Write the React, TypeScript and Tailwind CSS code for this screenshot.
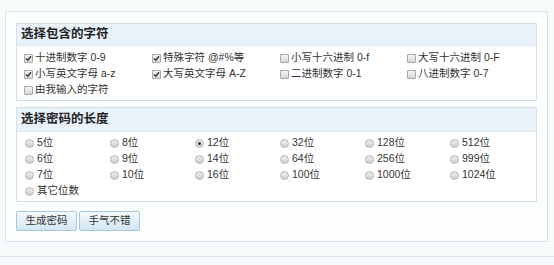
const charOptions = [
  { label: '十进制数字 0-9', checked: true },
  { label: '特殊字符 @#%等', checked: true },
  { label: '小写十六进制 0-f', checked: false },
  { label: '大写十六进制 0-F', checked: false },
  { label: '小写英文字母 a-z', checked: true },
  { label: '大写英文字母 A-Z', checked: true },
  { label: '二进制数字 0-1', checked: false },
  { label: '八进制数字 0-7', checked: false },
  { label: '由我输入的字符', checked: false },
];

const lengths = [
  '5位', '8位', '12位', '32位', '128位', '512位',
  '6位', '9位', '14位', '64位', '256位', '999位',
  '7位', '10位', '16位', '100位', '1000位', '1024位',
  '其它位数',
];

function CheckBox({ checked }: { checked: boolean }) {
  return (
    <span className="flex h-[9px] w-[9px] shrink-0 items-center justify-center rounded-[1px] border border-[#a8a8a8] bg-gradient-to-b from-[#f4f4f4] to-[#d8d8d8]">
      {checked && (
        <svg width="7" height="7" viewBox="0 0 7 7">
          <path d="M1 3.6 L2.8 5.3 L6 1.3" fill="none" stroke="#333" strokeWidth="1.4" />
        </svg>
      )}
    </span>
  );
}

function Radio({ checked }: { checked: boolean }) {
  return (
    <span className="flex h-[9px] w-[9px] shrink-0 items-center justify-center rounded-full border border-[#b4b4b4] bg-gradient-to-b from-[#eeeeee] to-[#d0d0d0]">
      {checked && <span className="h-[3px] w-[3px] rounded-full bg-[#333]" />}
    </span>
  );
}

function SectionHeader({ title, tall }: { title: string; tall?: boolean }) {
  return (
    <div
      className={`flex items-center border-b border-[#e3ebf2] bg-[#e9f1f9] pl-[4px] text-[12.5px] font-bold text-[#222] ${tall ? 'h-[24px]' : 'h-[22px]'}`}
    >
      {title}
    </div>
  );
}

export default function App() {
  return (
    <div
      className="h-[265px] w-[554px] bg-[#f7fbfc] pt-[11px] text-[10.5px] text-[#333]"
      style={{ fontFamily: '"Liberation Sans", "Noto Sans CJK SC", sans-serif' }}
    >
      <div className="ml-[5px] w-[543px] border border-[#d8e5ea] bg-[#fcfefe] px-[10px] pb-[10px] pt-[11px]">
        <div className="border border-[#d3dfe9] bg-white">
          <SectionHeader title="选择包含的字符" />
          <div className="grid grid-cols-[128px_128px_127px_127px] pb-[2px] pl-[7px] pt-[4px]">
            {charOptions.map((o) => (
              <div key={o.label} className="flex h-[16px] items-center gap-[2px] whitespace-nowrap">
                <CheckBox checked={o.checked} />
                <span>{o.label}</span>
              </div>
            ))}
          </div>
        </div>

        <div className="mt-[6px] border border-[#d3dfe9] bg-white">
          <SectionHeader title="选择密码的长度" tall />
          <div className="grid grid-cols-[85px_85px_85px_85px_85px_85px] pb-[2px] pl-[8px] pt-[3px]">
            {lengths.map((l) => (
              <div key={l} className="flex h-[16px] items-center gap-[3px] whitespace-nowrap">
                <Radio checked={l === '12位'} />
                <span>{l}</span>
              </div>
            ))}
          </div>
        </div>

        <div className="mt-[9px] flex gap-[2px]">
          <button className="h-[20px] w-[61px] rounded-[2px] border border-[#aac6da] bg-gradient-to-b from-[#f3f9fd] to-[#d3e6f4] text-[10.5px] text-[#333]">
            生成密码
          </button>
          <button className="h-[20px] w-[61px] rounded-[2px] border border-[#aac6da] bg-gradient-to-b from-[#f3f9fd] to-[#d3e6f4] text-[10.5px] text-[#333]">
            手气不错
          </button>
        </div>
      </div>
      <div className="mt-[14px] border-t border-[#d8e5ea]" />
    </div>
  );
}
